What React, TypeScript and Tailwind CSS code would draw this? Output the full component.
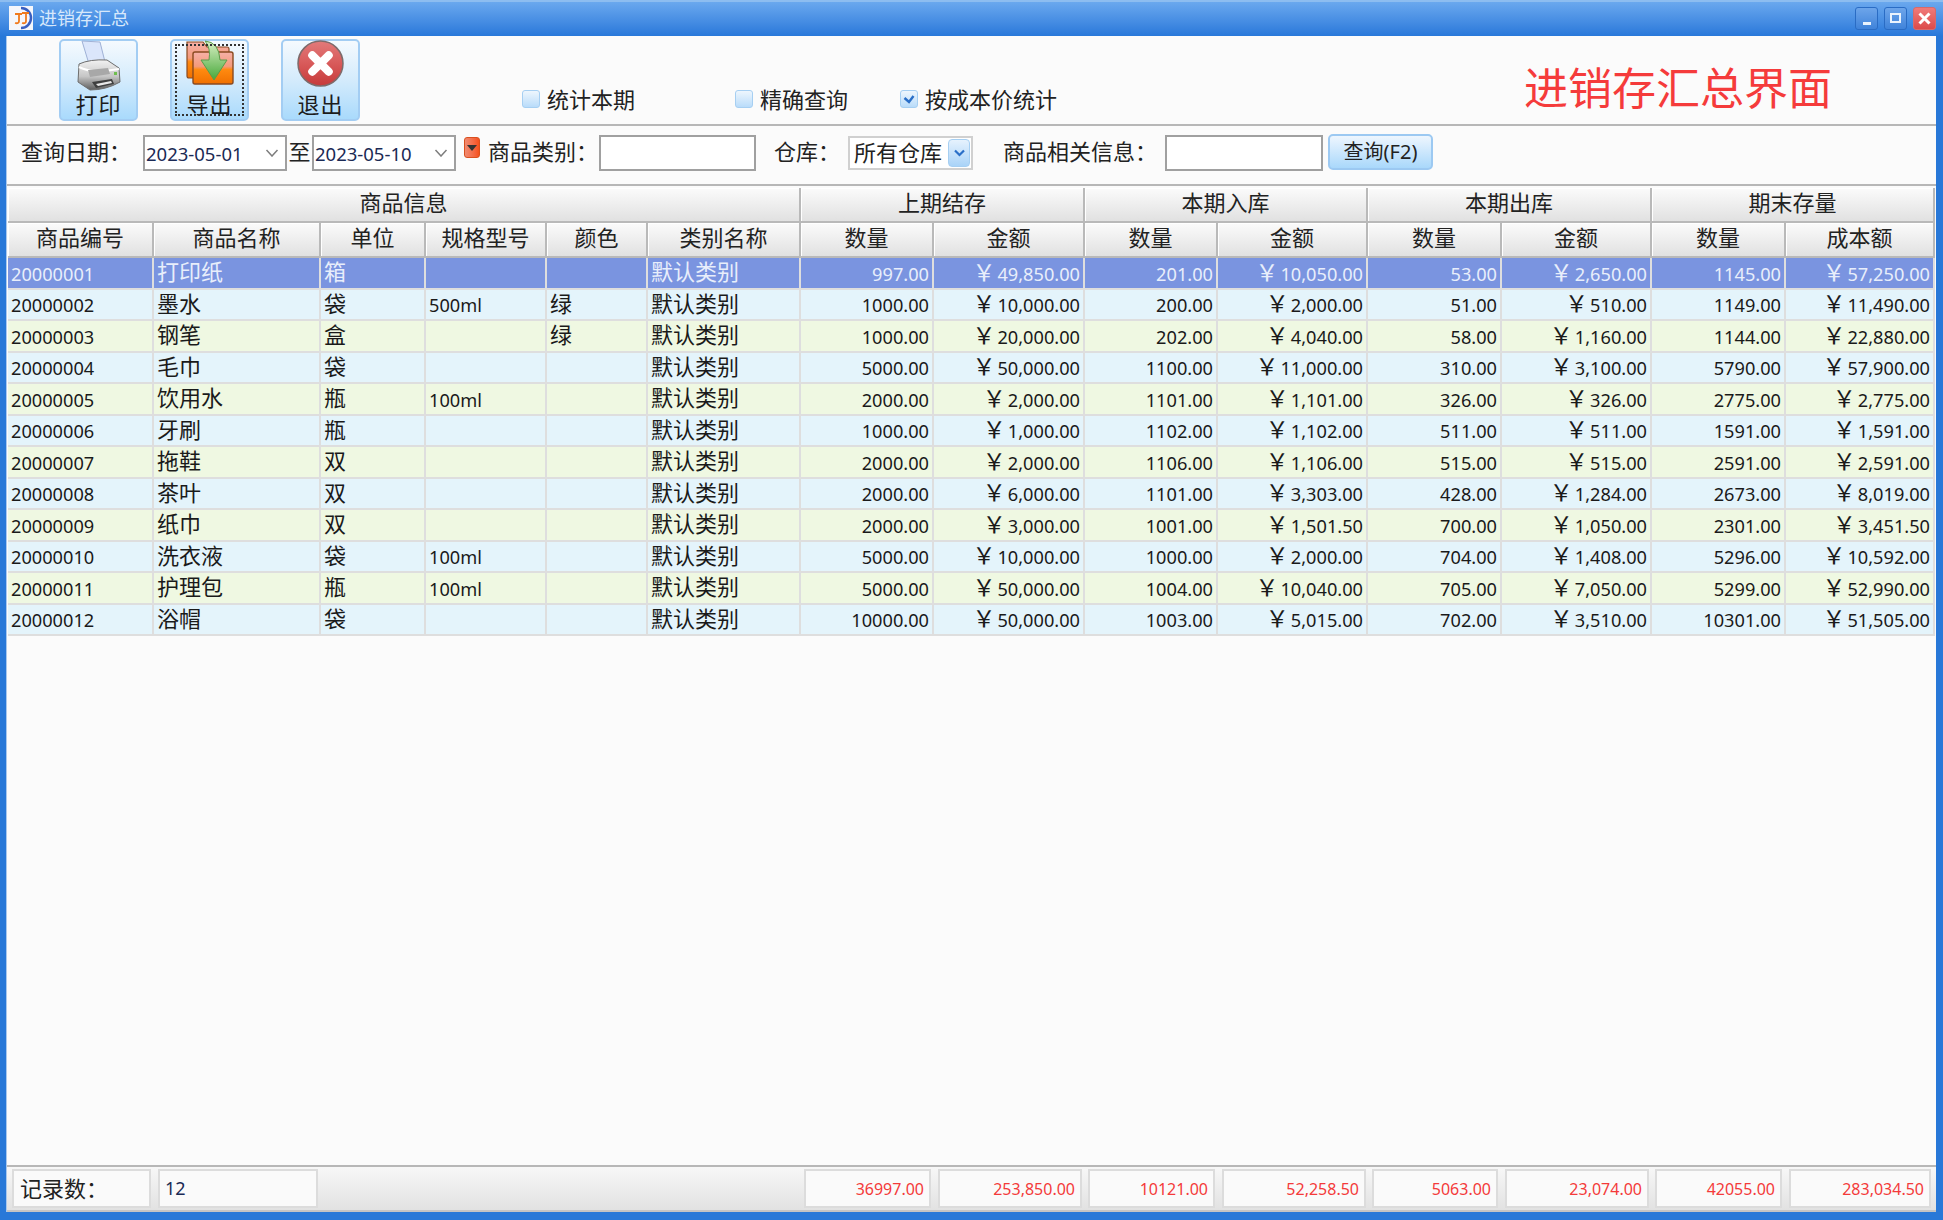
import React from "react";

const rows = [
  ["20000001","打印纸","箱","","","默认类别","997.00","49,850.00","201.00","10,050.00","53.00","2,650.00","1145.00","57,250.00"],
  ["20000002","墨水","袋","500ml","绿","默认类别","1000.00","10,000.00","200.00","2,000.00","51.00","510.00","1149.00","11,490.00"],
  ["20000003","钢笔","盒","","绿","默认类别","1000.00","20,000.00","202.00","4,040.00","58.00","1,160.00","1144.00","22,880.00"],
  ["20000004","毛巾","袋","","","默认类别","5000.00","50,000.00","1100.00","11,000.00","310.00","3,100.00","5790.00","57,900.00"],
  ["20000005","饮用水","瓶","100ml","","默认类别","2000.00","2,000.00","1101.00","1,101.00","326.00","326.00","2775.00","2,775.00"],
  ["20000006","牙刷","瓶","","","默认类别","1000.00","1,000.00","1102.00","1,102.00","511.00","511.00","1591.00","1,591.00"],
  ["20000007","拖鞋","双","","","默认类别","2000.00","2,000.00","1106.00","1,106.00","515.00","515.00","2591.00","2,591.00"],
  ["20000008","茶叶","双","","","默认类别","2000.00","6,000.00","1101.00","3,303.00","428.00","1,284.00","2673.00","8,019.00"],
  ["20000009","纸巾","双","","","默认类别","2000.00","3,000.00","1001.00","1,501.50","700.00","1,050.00","2301.00","3,451.50"],
  ["20000010","洗衣液","袋","100ml","","默认类别","5000.00","10,000.00","1000.00","2,000.00","704.00","1,408.00","5296.00","10,592.00"],
  ["20000011","护理包","瓶","100ml","","默认类别","5000.00","50,000.00","1004.00","10,040.00","705.00","7,050.00","5299.00","52,990.00"],
  ["20000012","浴帽","袋","","","默认类别","10000.00","50,000.00","1003.00","5,015.00","702.00","3,510.00","10301.00","51,505.00"],
];

const subHeads = ["商品编号","商品名称","单位","规格型号","颜色","类别名称","数量","金额","数量","金额","数量","金额","数量","成本额"];

const headCell =
  "flex items-center justify-center h-[35px] pb-[5px] leading-none text-[22px] text-[#222] bg-gradient-to-b from-[#fbfbfb] to-[#e1e1e1] border-r-2 border-b-2 border-[#b9b9b9] shadow-[inset_1px_1px_0_#ffffff]";

function Printer() {
  return (
    <svg width="46" height="52" viewBox="0 0 46 52" className="block">
      <defs>
        <linearGradient id="pb" x1="0" y1="0" x2="0" y2="1">
          <stop offset="0" stopColor="#f2f2f2" />
          <stop offset="0.55" stopColor="#c6c6c6" />
          <stop offset="1" stopColor="#5d5d5d" />
        </linearGradient>
      </defs>
      <path d="M6 1 L24 2 L29 22 L13 24 Z" fill="#dbe6fb" stroke="#9fb1d6" strokeWidth="1" />
      <path d="M3 24 Q14 19 31 20 L43 28 L44 42 Q30 50 14 50 L2 42 Z" fill="url(#pb)" stroke="#6d6d6d" strokeWidth="1" />
      <path d="M3 27 Q16 34 43 29" fill="none" stroke="#ffffff" strokeWidth="2" />
      <path d="M12 30 L32 28 L34 34 L14 37 Z" fill="#a8a8a8" />
      <path d="M16 42 L36 39 L38 44 L20 48 Z" fill="#3f3f3f" />
      <path d="M20 44 L35 41 L36 43 L22 46 Z" fill="#e8e8e8" />
      <rect x="38" y="32" width="3" height="3" fill="#6fbf4e" />
    </svg>
  );
}

function FolderExport() {
  return (
    <svg width="50" height="46" viewBox="0 0 50 46" className="block">
      <defs>
        <linearGradient id="fo" x1="0" y1="0" x2="0" y2="1">
          <stop offset="0" stopColor="#f6b0a8" />
          <stop offset="0.45" stopColor="#f49a7a" />
          <stop offset="0.55" stopColor="#ff8a10" />
          <stop offset="1" stopColor="#f07000" />
        </linearGradient>
        <linearGradient id="ar" x1="0" y1="0" x2="0" y2="1">
          <stop offset="0" stopColor="#d9f0c4" />
          <stop offset="1" stopColor="#46a83a" />
        </linearGradient>
      </defs>
      <path d="M2 2 H18 L22 7 H42 Q44 7 44 9 V38 H4 Q2 38 2 36 Z" fill="url(#fo)" stroke="#8a4a20" strokeWidth="1.2" />
      <path d="M8 14 Q8 12 10 12 H46 Q48 12 48 14 V42 Q48 44 46 44 H10 Q8 44 8 42 Z" fill="url(#fo)" stroke="#8a4a20" strokeWidth="1.4" />
      <path d="M20 1 Q34 2 35 20 H42 L29 40 L16 20 H24 Q26 8 20 1 Z" fill="url(#ar)" stroke="#5c9b4a" strokeWidth="1" />
    </svg>
  );
}

function ExitIcon() {
  return (
    <svg width="47" height="47" viewBox="0 0 46 46" className="block">
      <defs>
        <linearGradient id="ex" x1="0" y1="0" x2="0" y2="1">
          <stop offset="0" stopColor="#e27a7a" />
          <stop offset="0.5" stopColor="#d85a5a" />
          <stop offset="1" stopColor="#c63a3a" />
        </linearGradient>
      </defs>
      <circle cx="23" cy="23" r="22" fill="url(#ex)" stroke="#7d6b6b" strokeWidth="1.5" />
      <path d="M15 15 L31 31 M31 15 L15 31" stroke="#ffffff" strokeWidth="8" strokeLinecap="round" />
    </svg>
  );
}

function ToolButton({ label, icon, focus, ml }: { label: string; icon: React.ReactNode; focus?: boolean; ml: string }) {
  return (
    <div className={`relative flex flex-col items-center w-[79px] h-[82px] rounded-[5px] border-2 border-[#a3cdf3] bg-gradient-to-b from-[#f5fafe] via-[#d4ebfc] to-[#a9dafc] ${ml}`}>
      <div className="h-[51px] flex items-start justify-center -mt-[1px]">{icon}</div>
      <div className="text-[22px] leading-[26px] tracking-[1px] text-[#1c1c1c]">{label}</div>
      {focus && <div className="absolute inset-[3px] border-2 border-dotted border-[#333]" />}
    </div>
  );
}

function Check({ checked, ml, label }: { checked?: boolean; ml: string; label: string }) {
  return (
    <div className={`flex items-center gap-[7px] ${ml}`}>
      <div className="flex items-center justify-center w-[18px] h-[18px] rounded-[3px] border border-[#a6cff2] bg-gradient-to-b from-[#eef6fd] to-[#b9dcfa]">
        {checked && (
          <svg width="12" height="10" viewBox="0 0 12 10">
            <path d="M1.5 4 L6 8 L10.5 2" fill="none" stroke="#2a6fc8" strokeWidth="2.4" />
          </svg>
        )}
      </div>
      <span className="text-[22px] leading-[26px] text-[#222]">{label}</span>
    </div>
  );
}

function DateBox({ value }: { value: string }) {
  return (
    <div className="flex items-center justify-between w-[144px] h-[36px] border-2 border-[#a0a0a0] bg-white pl-[1px] pr-[6px]">
      <span className="text-[18.5px] leading-none mt-[3px] text-[#1b2a55]">{value}</span>
      <svg width="14" height="8" viewBox="0 0 14 8"><path d="M1.5 1 L7 7 L12.5 1" fill="none" stroke="#7d7d7d" strokeWidth="1.5" /></svg>
    </div>
  );
}

const Amount = ({ v }: { v: string }) => (
  <span className="flex items-center justify-end leading-none">
    <span className="text-[23px] leading-none -mt-[3px] mr-[2px]">￥</span>
    <span>{v}</span>
  </span>
);

export default function App() {
  return (
    <div className="w-[1943px] h-[1220px] flex flex-col overflow-hidden bg-[#2878d8] [font-family:'Noto_Sans','Noto_Sans_CJK_SC',sans-serif]">
      {/* title bar */}
      <div className="h-[36px] shrink-0 flex items-center bg-gradient-to-b from-[#6aa8ee] to-[#2878da] border-t-2 border-[#8dbdf0] pl-[9px] pr-[7px]">
        <svg width="24" height="24" viewBox="0 0 24 24" className="block -mt-[2px]">
          <rect width="24" height="24" fill="#f4f6fb" />
          <path d="M12 2 A10 10 0 1 1 12 22" fill="none" stroke="#3a5fc0" strokeWidth="2.5" />
          <path d="M6 8 H13 M10 8 V15 Q10 18 6 17 M13 7 H20 M17 7 V15 Q17 18 13 17" fill="none" stroke="#f07a1c" strokeWidth="1.8" />
        </svg>
        <span className="ml-[6px] -mt-[2px] text-[18px] text-[#d7e8fb]">进销存汇总</span>
        <div className="ml-auto -mt-[2px] flex gap-[6px]">
          <div className="flex items-end justify-center w-[23px] h-[23px] rounded-[3px] border border-[#2a6cc4] bg-gradient-to-b from-[#6da5ea] to-[#3f83da] pb-[4px]">
            <div className="w-[8px] h-[3px] bg-[#eaf3fd]" />
          </div>
          <div className="flex items-center justify-center w-[23px] h-[23px] rounded-[3px] border border-[#2a6cc4] bg-gradient-to-b from-[#6da5ea] to-[#3f83da]">
            <div className="w-[11px] h-[10px] border-2 border-[#eaf3fd]" />
          </div>
          <div className="flex items-center justify-center w-[23px] h-[23px] rounded-[3px] border border-[#d86a6a] bg-gradient-to-b from-[#f07a7a] to-[#dc4a4a]">
            <svg width="13" height="13" viewBox="0 0 13 13"><path d="M1.5 1.5 L11.5 11.5 M11.5 1.5 L1.5 11.5" stroke="#fff" strokeWidth="3" /></svg>
          </div>
        </div>
      </div>

      {/* window body */}
      <div className="flex-1 min-h-0 flex flex-col ml-[6px] mr-[7px] mb-[8px] bg-[#fbfbfb] border-l border-[#a9c8ee]">
        {/* toolbar */}
        <div className="relative h-[90px] shrink-0 flex items-start pt-[3px] border-b-2 border-[#b7b7b7]">
          <ToolButton label="打印" icon={<Printer />} ml="ml-[52px]" />
          <ToolButton label="导出" icon={<FolderExport />} focus ml="ml-[32px]" />
          <ToolButton label="退出" icon={<ExitIcon />} ml="ml-[32px]" />
          <div className="flex items-center mt-[47px]">
            <Check label="统计本期" ml="ml-[162px]" />
            <Check label="精确查询" ml="ml-[100px]" />
            <Check checked label="按成本价统计" ml="ml-[52px]" />
          </div>
          <div className="ml-auto mr-[104px] mt-[20px] text-[44px] leading-[58px] text-[#f53b3b]">进销存汇总界面</div>
        </div>

        {/* filter */}
        <div className="h-[60px] shrink-0 flex items-center pb-[4px] border-b-2 border-[#b7b7b7] text-[22px] text-[#222]">
          <span className="ml-[14px] w-[122px] -mt-[3px]">查询日期：</span>
          <DateBox value="2023-05-01" />
          <span className="w-[25px] text-center -mt-[3px]">至</span>
          <DateBox value="2023-05-10" />
          <div className="ml-[8px] self-start mt-[11px] flex items-center justify-center w-[16px] h-[21px] rounded-[3px] border border-[#d9501f] bg-gradient-to-r from-[#f08a70] to-[#f5501a]">
            <div className="w-0 h-0 border-l-[5px] border-r-[5px] border-t-[6px] border-l-transparent border-r-transparent border-t-[#333]" />
          </div>
          <span className="ml-[8px] w-[111px] -mt-[3px]">商品类别：</span>
          <div className="w-[157px] h-[36px] border-2 border-[#a0a0a0] bg-white" />
          <span className="ml-[18px] w-[74px] -mt-[3px]">仓库：</span>
          <div className="flex items-center justify-between w-[125px] h-[34px] border-2 border-[#d0d0d0] bg-white pl-[4px] pr-[1px]">
            <span className="whitespace-nowrap leading-none pb-[2px]">所有仓库</span>
            <div className="flex items-center justify-center w-[22px] h-[28px] rounded-[4px] border border-[#a6cff2] bg-gradient-to-b from-[#e6f2fd] to-[#a9d3f8]">
              <svg width="11" height="8" viewBox="0 0 11 8"><path d="M1 1.5 L5.5 6 L10 1.5" fill="none" stroke="#2a6fc8" strokeWidth="2.2" /></svg>
            </div>
          </div>
          <span className="ml-[30px] w-[162px] whitespace-nowrap -mt-[3px]">商品相关信息：</span>
          <div className="w-[158px] h-[36px] border-2 border-[#a0a0a0] bg-white" />
          <div className="ml-[5px] self-start mt-[8px] flex items-center justify-center w-[105px] h-[36px] rounded-[5px] border-2 border-[#9cc9f2] bg-gradient-to-b from-[#eef6fe] to-[#a9d8fb] text-[20px]">
            查询(F2)
          </div>
        </div>

        {/* table */}
        <div className="shrink-0 ml-[1px] mt-[2px] w-[1927px] grid grid-cols-[146px_167px_105px_121px_101px_153px_133px_151px_133px_150px_134px_150px_134px_149px] text-[18.2px] text-[#1a1a1a]">
          <div className={`col-span-6 ${headCell}`}>商品信息</div>
          <div className={`col-span-2 ${headCell}`}>上期结存</div>
          <div className={`col-span-2 ${headCell}`}>本期入库</div>
          <div className={`col-span-2 ${headCell}`}>本期出库</div>
          <div className={`col-span-2 ${headCell}`}>期末存量</div>
          {subHeads.map((h, i) => (
            <div key={i} className={headCell}>{h}</div>
          ))}
          {rows.map((r, ri) => {
            const bg = ri === 0 ? "bg-[#7a94e0] text-[#e8eefb]" : ri % 2 === 1 ? "bg-[#e4f4fb]" : "bg-[#eff8e2]";
            return r.map((c, ci) => {
              const base = `h-[31.5px] leading-none whitespace-nowrap border-r-2 border-b-2 border-[#dedede] flex items-center ${bg}`;
              if (ci >= 6) {
                return (
                  <div key={`${ri}-${ci}`} className={`${base} justify-end pr-[3px] pt-[2px]`}>
                    {ci % 2 === 1 ? <Amount v={c} /> : c}
                  </div>
                );
              }
              const cjk = ci === 1 || ci === 2 || ci === 4 || ci === 5;
              return (
                <div key={`${ri}-${ci}`} className={`${base} pl-[3px] ${cjk ? "text-[22px] pb-[3px]" : "pt-[2px]"}`}>
                  {c}
                </div>
              );
            });
          })}
        </div>

        {/* footer */}
        <div className="mt-auto h-[47px] shrink-0 flex items-center border-t-2 border-b-2 border-t-[#b7b7b7] border-b-[#c4c4c4] bg-gradient-to-b from-[#f7f7f7] to-[#e2e2e2] text-[16px] text-[#f43a3a]">
          <div className="ml-[5px] w-[139px] h-[39px] flex items-center pl-[6px] pb-[2px] border-2 border-[#dcdcdc] bg-[#fafafa] text-[22px] leading-none text-[#222]">记录数：</div>
          <div className="ml-[7px] w-[160px] h-[39px] flex items-center pl-[5px] border-2 border-[#dcdcdc] bg-[#fafafa] text-[18px] text-[#1b2a55]">12</div>
          {[
            ["36997.00", "ml-[486px] w-[127px]"],
            ["253,850.00", "ml-[7px] w-[144px]"],
            ["10121.00", "ml-[6px] w-[127px]"],
            ["52,258.50", "ml-[7px] w-[144px]"],
            ["5063.00", "ml-[6px] w-[126px]"],
            ["23,074.00", "ml-[7px] w-[144px]"],
            ["42055.00", "ml-[6px] w-[127px]"],
            ["283,034.50", "ml-[7px] w-[142px]"],
          ].map(([v, cls]) => (
            <div key={v} className={`${cls} h-[39px] flex items-center justify-end pr-[5px] border-2 border-[#dcdcdc] bg-[#fafafa]`}>{v}</div>
          ))}
        </div>
      </div>
    </div>
  );
}
